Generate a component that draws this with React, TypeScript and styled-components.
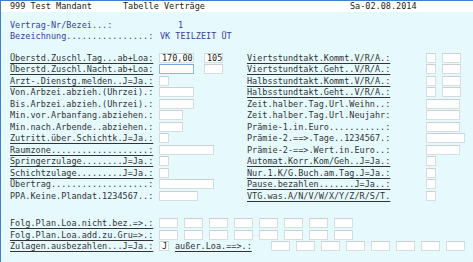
import React from 'react';
import styled, { createGlobalStyle } from 'styled-components';

const GlobalStyle = createGlobalStyle`
	html, body {
		margin: 0;
		padding: 0;
		background: #e6fafe;
	}
	body {
		font-family: "DejaVu Sans Mono", "Liberation Mono", monospace;
		font-size: 8.5px;
		color: #333;
	}
`;

const Screen = styled.div`
	width: 473px;
	height: 262px;
	box-sizing: border-box;
	background: #e6fafe;
	border-top: 1px solid #3d7fd0;
	border-left: 1px solid #3d7fd0;
	overflow: hidden;
`;

const TopBar = styled.div`
	display: flex;
	height: 11px;
	line-height: 11px;
	background: #fff;
	padding-left: 9px;
	color: #222;
	white-space: pre;
`;

const TopItem = styled.span<{ $w?: number }>`
	width: ${p => (p.$w ? `${p.$w}px` : 'auto')};
	flex: none;
`;

const Info = styled.div`
	margin-top: 8px;
	padding-left: 9px;
	color: #3a3aa2;
	line-height: 10.5px;
`;

const InfoRow = styled.div`
	display: flex;
	white-space: pre;
`;

const InfoLabel = styled.span`
	width: 150px;
	flex: none;
`;

const InfoValue = styled.span<{ $right?: boolean }>`
	width: ${p => (p.$right ? '23px' : 'auto')};
	text-align: ${p => (p.$right ? 'right' : 'left')};
`;

const Columns = styled.div`
	display: grid;
	grid-template-columns: 237px 1fr;
	margin-top: 11px;
	padding-left: 9px;
`;

const Column = styled.div`
	display: flex;
	flex-direction: column;
`;

const Row = styled.div`
	display: flex;
	align-items: center;
	height: 11.5px;
	white-space: pre;
`;

const Label = styled.span<{ $w: number; $link?: boolean }>`
	width: ${p => p.$w}px;
	flex: none;
	color: #333;
	text-decoration: ${p => (p.$link ? 'underline' : 'none')};
	text-underline-offset: 1.5px;
`;

const Fields = styled.div<{ $gap: number }>`
	display: flex;
	gap: ${p => p.$gap}px;
`;

const Box = styled.div<{ $w: number; $focus?: boolean }>`
	width: ${p => p.$w}px;
	height: 10px;
	box-sizing: border-box;
	background: #fff;
	border: 1px solid ${p => (p.$focus ? '#8db6e2' : '#d6dcdf')};
	border-top-color: ${p => (p.$focus ? '#7aa8db' : '#c9cfd2')};
	color: #222;
	line-height: 8px;
	padding-left: 2px;
	flex: none;
`;

const Bottom = styled.div`
	display: flex;
	flex-direction: column;
	margin-top: 16px;
	padding-left: 9px;
`;

const Extra = styled.span`
	margin-left: 6px;
	margin-right: 19px;
	text-decoration: underline;
	text-underline-offset: 1.5px;
	color: #333;
`;

type Field = { w: number; v?: string; focus?: boolean };
type Line = { label: string; link?: boolean; fields: Field[]; gap?: number };

const leftLines: Line[] = [
	{ label: 'Überstd.Zuschl.Tag...ab+Loa:', link: true, fields: [{ w: 35, v: '170,00' }, { w: 19, v: '105' }], gap: 10 },
	{ label: 'Überstd.Zuschl.Nacht.ab+Loa:', link: true, fields: [{ w: 35, focus: true }, { w: 19 }], gap: 10 },
	{ label: 'Arzt-.Dienstg.melden..J=Ja.:', link: true, fields: [{ w: 10 }] },
	{ label: 'Von.Arbzei.abzieh.(Uhrzei).:', fields: [{ w: 35 }] },
	{ label: 'Bis.Arbzei.abzieh.(Uhrzei).:', fields: [{ w: 35 }] },
	{ label: 'Min.vor.Arbanfang.abziehen.:', fields: [{ w: 24 }] },
	{ label: 'Min.nach.Arbende..abziehen.:', fields: [{ w: 24 }] },
	{ label: 'Zutritt.über.Schichtk.J=Ja.:', link: true, fields: [{ w: 10 }] },
	{ label: 'Raumzone...................:', link: true, fields: [{ w: 55 }] },
	{ label: 'Springerzulage........J=Ja.:', link: true, fields: [{ w: 10 }] },
	{ label: 'Schichtzulage.........J=Ja.:', link: true, fields: [{ w: 10 }] },
	{ label: 'Übertrag...................:', fields: [{ w: 55 }] },
	{ label: 'PPA.Keine.Plandat.1234567..:', fields: [{ w: 39 }] },
];

const rightLines: Line[] = [
	{ label: 'Viertstundtakt.Kommt.V/R/A.:', link: true, fields: [{ w: 10 }, { w: 19 }] },
	{ label: 'Viertstundtakt.Geht..V/R/A.:', link: true, fields: [{ w: 10 }, { w: 19 }] },
	{ label: 'Halbsstundtakt.Kommt.V/R/A.:', link: true, fields: [{ w: 10 }, { w: 19 }] },
	{ label: 'Halbsstundtakt.Geht..V/R/A.:', link: true, fields: [{ w: 10 }, { w: 19 }] },
	{ label: 'Zeit.halber.Tag.Url.Weihn..:', fields: [{ w: 34 }] },
	{ label: 'Zeit.halber.Tag.Url.Neujahr:', fields: [{ w: 34 }] },
	{ label: 'Prämie-1.in.Euro...........:', fields: [{ w: 34 }] },
	{ label: 'Prämie-2.==>.Tage..1234567.:', fields: [{ w: 39 }] },
	{ label: 'Prämie-2-==>.Wert.in.Euro..:', fields: [{ w: 34 }] },
	{ label: 'Automat.Korr.Kom/Geh..J=Ja.:', link: true, fields: [{ w: 10 }] },
	{ label: 'Nur.1.K/G.Buch.am.Tag.J=Ja.:', link: true, fields: [{ w: 10 }] },
	{ label: 'Pause.bezahlen.......J=Ja..:', link: true, fields: [{ w: 10 }] },
	{ label: 'VTG.was.A/N/V/W/X/Y/Z/R/S/T.', link: true, fields: [{ w: 10 }] },
];

const eight: Field[] = Array.from({ length: 8 }, () => ({ w: 19 }));

const FieldLine: React.FC<{ line: Line; labelWidth: number }> = ({ line, labelWidth }) => (
	<Row>
		<Label $w={labelWidth} $link={line.link}>{line.label}</Label>
		<Fields $gap={line.gap ?? 6}>
			{line.fields.map((f, i) => (
				<Box key={i} $w={f.w} $focus={f.focus}>{f.v}</Box>
			))}
		</Fields>
	</Row>
);

const App: React.FC = () => {
	return (
		<Screen>
			<GlobalStyle />
			<TopBar>
				<TopItem $w={113}>999 Test Mandant</TopItem>
				<TopItem $w={227}>Tabelle Verträge</TopItem>
				<TopItem>Sa-02.08.2014</TopItem>
			</TopBar>

			<Info>
				<InfoRow>
					<InfoLabel>Vertrag-Nr/Bezei...:</InfoLabel>
					<InfoValue $right>1</InfoValue>
				</InfoRow>
				<InfoRow>
					<InfoLabel>Bezeichnung................: </InfoLabel>
					<InfoValue>VK TEILZEIT ÜT</InfoValue>
				</InfoRow>
			</Info>

			<Columns>
				<Column>
					{leftLines.map(l => <FieldLine key={l.label} line={l} labelWidth={149} />)}
				</Column>
				<Column>
					{rightLines.map(l => <FieldLine key={l.label} line={l} labelWidth={179} />)}
				</Column>
			</Columns>

			<Bottom>
				<FieldLine line={{ label: 'Folg.Plan.Loa.nicht.bez.=>.:', link: true, fields: eight }} labelWidth={149} />
				<FieldLine line={{ label: 'Folg.Plan.Loa.add.zu.Gru=>.:', link: true, fields: eight }} labelWidth={149} />
				<Row>
					<Label $w={149} $link>Zulagen.ausbezahlen...J=Ja.:</Label>
					<Box $w={10}>J</Box>
					<Extra>außer.Loa.==&gt;.:</Extra>
					<Fields $gap={6}>
						{eight.map((f, i) => <Box key={i} $w={f.w} />)}
					</Fields>
				</Row>
			</Bottom>
		</Screen>
	);
};

export default App;
